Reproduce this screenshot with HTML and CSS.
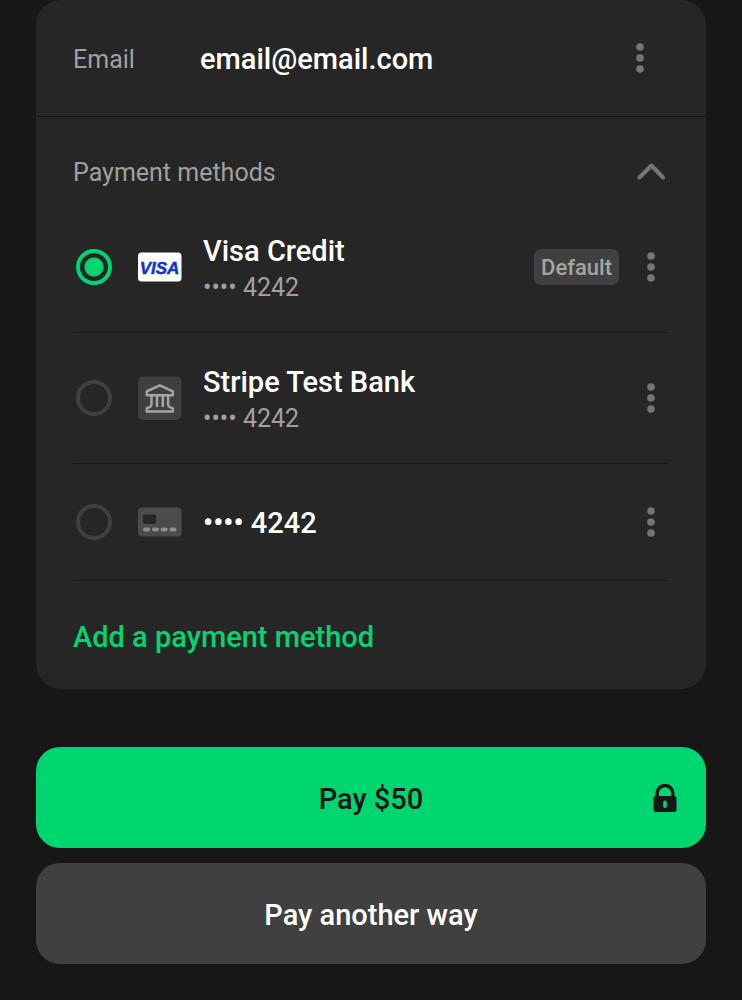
FILE: index.html
```html
<!DOCTYPE html>
<html lang="en">
<head>
<meta charset="utf-8">
<meta name="viewport" content="width=device-width, initial-scale=1">
<title>Checkout</title>
<link rel="stylesheet" href="styles.css">
</head>
<body>
<svg class="sprite" aria-hidden="true">
  <symbol id="dots" viewBox="0 0 8 30"><circle cx="4" cy="4" r="3.8"/><circle cx="4" cy="15" r="3.8"/><circle cx="4" cy="26" r="3.8"/></symbol>
</svg>
<main class="checkout">
  <section class="card">
    <div class="email-row">
      <span class="label">Email</span>
      <span class="email">email@email.com</span>
      <button class="icon-button" type="button" aria-label="Email options"><svg class="dots"><use href="#dots"/></svg></button>
    </div>
    <div class="methods">
      <div class="methods-header">
        <h2 class="label">Payment methods</h2>
        <button class="icon-button" type="button" aria-label="Collapse payment methods">
          <svg class="chevron" viewBox="0 0 28 18"><path d="M2.500 15.500 14.500 3.500l11.500 12"/></svg>
        </button>
      </div>
      <ul class="method-list">
        <li class="method">
          <input class="radio" type="radio" name="method" id="visa" checked>
          <svg class="brand brand-wide" viewBox="0 0 44 30" aria-hidden="true">
            <rect width="43.500" height="29" x="0" y="0.500" rx="3.500" fill="#fff"/>
            <text class="visa" x="21.500" y="21.500" text-anchor="middle">VISA</text>
          </svg>
          <label class="details" for="visa"><span class="name">Visa Credit</span><span class="number">•••• 4242</span></label>
          <span class="badge">Default</span>
          <button class="icon-button" type="button" aria-label="Visa Credit options"><svg class="dots"><use href="#dots"/></svg></button>
        </li>
        <li class="method">
          <input class="radio" type="radio" name="method" id="bank">
          <svg class="brand brand-square" viewBox="0 0 44 44" aria-hidden="true">
            <rect width="43.500" height="43.500" y="0.500" rx="5" fill="#404040"/>
            <g fill="none" stroke="#a5a5a5" stroke-width="2.500" stroke-linejoin="round" stroke-linecap="round">
              <path d="M8.800 19.300v-4L21.800 9.300l13 6v4z"/>
              <path d="M13.500 19.500v9Q13.500 31 8.800 32.200v3.300h26v-3.300q-4.700-1.200-4.700-3.700v-9M19 20v10M24.800 20v10"/>
            </g>
          </svg>
          <label class="details" for="bank"><span class="name">Stripe Test Bank</span><span class="number">•••• 4242</span></label>
          <button class="icon-button" type="button" aria-label="Stripe Test Bank options"><svg class="dots"><use href="#dots"/></svg></button>
        </li>
        <li class="method method-short">
          <input class="radio" type="radio" name="method" id="card">
          <svg class="brand brand-wide" viewBox="0 0 44 30" aria-hidden="true">
            <rect width="43.500" height="29" y="0.500" rx="4" fill="#4b4b4b"/>
            <rect x="5" y="7.500" width="13" height="9.500" rx="2" fill="#262626"/>
            <g fill="#8d8d8d"><rect x="5" y="20.500" width="7" height="4" rx="2"/><rect x="14" y="20.500" width="7" height="4" rx="2"/><rect x="22.700" y="20.500" width="7" height="4" rx="2"/><rect x="31.500" y="20.500" width="7" height="4" rx="2"/></g>
          </svg>
          <label class="details" for="card"><span class="name">•••• 4242</span></label>
          <button class="icon-button" type="button" aria-label="Card options"><svg class="dots"><use href="#dots"/></svg></button>
        </li>
      </ul>
      <button class="add" type="button">Add a payment method</button>
    </div>
  </section>
  <div class="actions">
    <button class="action pay" type="button">
      <span class="action-text">Pay $50</span>
      <svg class="lock" viewBox="0 0 24 28" aria-hidden="true">
        <path d="M4.200 13V8.800a7.700 7.200 0 0 1 15.600 0V13" fill="none" stroke="#171717" stroke-width="3.400"/>
        <path fill="#171717" fill-rule="evenodd" d="M3 12h18a2.500 2.500 0 0 1 2.500 2.500v11A2.500 2.500 0 0 1 21 28H3a2.500 2.500 0 0 1-2.500-2.500v-11A2.500 2.500 0 0 1 3 12zm9 4.500a1.800 1.800 0 0 0-1.800 1.800v4a1.800 1.800 0 0 0 3.600 0v-4a1.800 1.800 0 0 0-1.800-1.800z"/>
      </svg>
    </button>
    <button class="action other" type="button"><span class="action-text">Pay another way</span></button>
  </div>
</main>
</body>
</html>
```
FILE: styles.css
```css
* { box-sizing: border-box; }
body {
  margin: 0;
  background: #171717;
  color: #fff;
  font-family: Roboto, "Liberation Sans", sans-serif;
}
button {
  margin: 0;
  padding: 0;
  border: 0;
  background: none;
  color: inherit;
  font: inherit;
  cursor: pointer;
}
.sprite { display: none; }
.checkout { padding: 0 36px 36px; }
.card {
  border-radius: 25px;
  background: #262626;
}
.email-row {
  display: flex;
  align-items: center;
  padding: 38px 48px 38px 37px;
  border-bottom: 1px solid #171717;
}
.label {
  margin: 0;
  padding-top: 3px;
  color: #a0a0a0;
  font-size: 25px;
  font-weight: 400;
  line-height: 37px;
}
.email-row .label { width: 127px; }
.email {
  flex: 1;
  padding-top: 3px;
  font-size: 29px;
  font-weight: 500;
  line-height: 37px;
}
.icon-button {
  display: flex;
  align-items: center;
  justify-content: center;
  width: 36px;
  height: 36px;
}
.dots {
  width: 8px;
  height: 30px;
  fill: #757575;
}
.methods { padding: 34px 37px 0; }
.methods-header {
  display: flex;
  align-items: center;
  justify-content: space-between;
  padding-bottom: 11px;
}
.chevron {
  width: 28px;
  height: 18px;
  fill: none;
  stroke: #757575;
  stroke-width: 4px;
  stroke-linecap: round;
  stroke-linejoin: round;
}
.method-list {
  margin: 0;
  padding: 0;
  list-style: none;
}
.method {
  display: flex;
  align-items: center;
  min-height: 131px;
  padding-left: 3px;
  border-bottom: 1px solid #1a1a1a;
}
.method-short { min-height: 117px; }
.radio {
  appearance: none;
  width: 36px;
  height: 36px;
  margin: 0 26px 0 0;
  border: 4px solid #404040;
  border-radius: 50%;
}
.radio:checked {
  border-color: #00d66f;
  background: radial-gradient(circle, #00d66f 9px, transparent 10px);
}
.brand { width: 44px; margin-right: 21px; }
.brand-wide { height: 30px; }
.brand-square { height: 44px; }
.visa {
  fill: #1434cb;
  stroke: #1434cb;
  stroke-width: 0.5;
  font-family: "Liberation Sans", sans-serif;
  font-size: 17px;
  font-style: italic;
  font-weight: 700;
}
.details {
  display: flex;
  flex: 1;
  flex-direction: column;
  padding-top: 5px;
}
.method-short .details { padding-top: 2px; }
.name {
  font-size: 29px;
  font-weight: 500;
  line-height: 36px;
}
.number {
  color: #a0a0a0;
  font-size: 25px;
  line-height: 37px;
}
.badge {
  margin-right: 14px;
  padding: 2px 7px 0;
  border-radius: 7px;
  background: #404040;
  color: #a5a5a5;
  font-size: 22px;
  font-weight: 500;
  line-height: 34px;
}
.add {
  display: block;
  padding: 38px 0 34px;
  color: #00d66f;
  font-size: 29px;
  font-weight: 500;
  line-height: 36px;
}
.actions {
  display: grid;
  gap: 15px;
  padding-top: 58px;
}
.action {
  display: grid;
  grid-template-columns: 1fr auto 1fr;
  align-items: center;
  padding: 31px 29px;
  border-radius: 24px;
  font-size: 29px;
  font-weight: 500;
}
.action-text {
  grid-column: 2;
  padding-top: 3px;
  line-height: 36px;
}
.pay {
  background: #00d66f;
  color: #171717;
}
.other { background: #404040; }
.lock {
  justify-self: end;
  width: 24px;
  height: 28px;
}
```
